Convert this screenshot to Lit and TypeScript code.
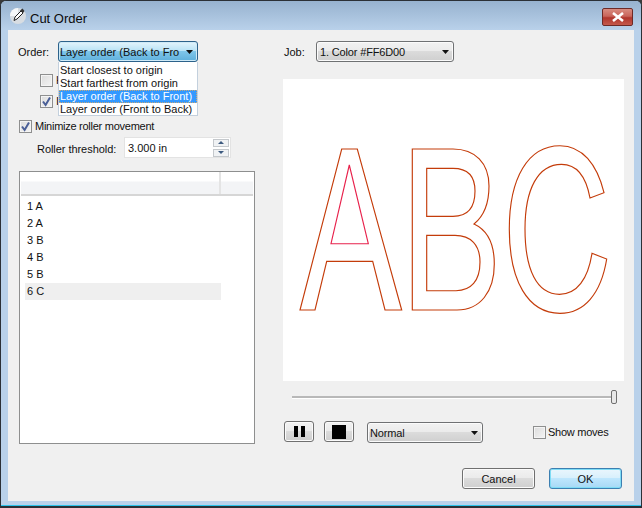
import { LitElement, html, css, svg } from "lit";
import { customElement } from "lit/decorators.js";

const check = html`<svg class="tick" viewBox="0 0 11 11"><path d="M2 5.5 L4.6 9 L9 1.6" fill="none" stroke="#4a5f97" stroke-width="2"/></svg>`;
const arrow = html`<svg class="arrow" viewBox="0 0 7 4"><path d="M0 0H7L3.5 4Z" fill="#111"/></svg>`;

const letters = svg`
  <g fill="none" stroke="#c43c0a" stroke-width="1.15">
    <path d="M341.7 149H357.3L401.7 310H385L372.7 261.3H326.7L315 310H300Z"/>
    <path d="M412.3 149H453C475 149 489 163 489 186C489 204 484 216 474 224C487 230 494.3 244 494.3 264C494.3 292 480 310 457 310H412.3Z"/>
    <path d="M426.7 168.3H453C468 168.3 475 176 475 191C475 208 468 216.3 453 216.3H426.7Z"/>
    <path d="M426.7 235.3H455C471 235.3 480 245 480 262C480 281 471 290.7 456 290.7H426.7Z"/>
    <path d="M604 192.7C597 164 582 145.7 560 145.7C528 145.7 509.3 178 509.3 229C509.3 281 528 313.3 560 313.3C584 313.3 601 294 606.7 259L592 253.3C588 279 577 294.3 559.5 294.3C537 294.3 525 270 525 229C525 189 538 164.3 561.5 164.3C576 164.3 586 176 590 198Z"/>
  </g>
  <path d="M349.3 165L368.3 243.7H331Z" fill="none" stroke="#e8224c" stroke-width="1.15"/>
`;

@customElement("app-root")
export class AppRoot extends LitElement {
  static styles = css`
    :host { display: block; width: 642px; height: 508px; font: 11px "Liberation Sans", Arial, sans-serif; color: #111; background: #3a3a3a; overflow: hidden; }
    * { box-sizing: border-box; }
    .window { width: 642px; height: 508px; display: flex; flex-direction: column; border: 1px solid #2b3036; border-bottom-width: 2px; border-radius: 6px 6px 0 0; background: #b9d1ea; box-shadow: inset 0 -1px 0 #2bc3ea; overflow: hidden; }
    .title { height: 29px; flex: none; display: flex; align-items: center; padding: 0 8px 0 8px; gap: 3px; background: linear-gradient(#97b2cf, #b9d1ea); }
    .title .app { width: 18px; height: 18px; flex: none; }
    .title .name { font-size: 13px; flex: 1; padding-top: 5px; color: #0b0b0b; }
    .close { width: 31px; height: 18px; margin-top: 3px; border: 1px solid #6e2a26; border-radius: 2px; background: linear-gradient(#d88c80 0, #c9645a 45%, #b0352c 55%, #c4594c 100%); display: flex; align-items: center; justify-content: center; }
    .close svg { width: 14px; height: 10px; }
    .content { flex: 1; margin: 0 7px 5px; background: #f0f0f0; padding: 11px 10px 0; display: grid; grid-template-columns: 255px 341px; gap: 10px; }
    .left, .right { display: flex; flex-direction: column; align-items: flex-start; }
    .row { display: flex; align-items: center; }
    .order { position: relative; height: 21px; }
    .order .lbl { width: 40px; }
    .select { height: 21px; border: 1px solid #6f7173; border-radius: 3px; background: linear-gradient(#f2f2f2 0, #ebebeb 45%, #dbdbdb 50%, #cfcfcf 100%); display: flex; align-items: center; justify-content: space-between; padding: 0 4px 0 3px; box-shadow: inset 0 0 0 1px #fbfbfb; white-space: nowrap; overflow: hidden; letter-spacing: -0.15px; }
    .speed { padding-left: 2px; }
    .select.focus { width: 140px; padding-left: 1px; border-color: #2c628b; background: linear-gradient(#e3f4fc 0, #b9e3f6 45%, #7fc6ea 50%, #5fb0dc 100%); box-shadow: inset 0 0 0 1px #cfeaf7; letter-spacing: 0; }
    .arrow { width: 7px; height: 4px; flex: none; }
    .popup { position: absolute; left: 40px; top: 21px; width: 140px; height: 54px; background: #fff; border: 1px solid #c3d0dd; border-top: none; z-index: 2; line-height: 13px; padding-top: 2px; }
    .popup div { height: 13px; padding-left: 1px; white-space: nowrap; }
    .popup .sel { background: #3399ff; color: #fff; outline: 1px dotted #c9a878; outline-offset: -1px; }
    .check { display: flex; align-items: center; gap: 3px; line-height: 13px; }
    .box { width: 13px; height: 13px; flex: none; border: 1px solid #8e8f8f; background: linear-gradient(135deg, #dcdcdc, #f4f4f4); box-shadow: inset 0 0 0 1px #f4f4f4; display: flex; align-items: center; justify-content: center; }
    .tick { width: 11px; height: 11px; }
    .c1 { margin: 12px 0 0 22px; }
    .c2 { margin: 8px 0 0 22px; }
    .c3 { margin: 12px 0 0 1px; letter-spacing: -0.26px; }
    .roller { margin: 4px 0 0 19px; height: 21px; }
    .roller .lbl { width: 87px; padding-top: 2px; letter-spacing: -0.05px; }
    .spin { width: 107px; height: 21px; background: #fff; border: 1px solid #e3e3e3; display: flex; align-items: center; justify-content: space-between; padding: 0 1px 0 3px; }
    .spins { display: flex; flex-direction: column; gap: 2px; }
    .spins span { width: 16px; height: 8px; border: 1px solid #c4c8cc; background: #f0f2f4; display: flex; align-items: center; justify-content: center; }
    .spins svg { width: 6px; height: 3px; }
    .list { margin: 13px 0 0 1px; width: 236px; height: 273px; background: #fff; border: 1px solid #8e8f8f; padding: 0 1px; }
    .head { height: 24px; display: flex; border-bottom: 2px solid #d6d6d6; background: linear-gradient(#fff 0, #fff 9px, #f3f4f6 10px, #f3f4f6 100%); }
    .head div { width: 200px; border-right: 2px solid #e4e4e4; }
    .rows { padding: 2px 0 0 4px; }
    .item { height: 17px; width: 196px; line-height: 17px; padding-left: 2px; }
    .item.hi { background: #efefef; }
    .job { height: 21px; padding-left: 1px; }
    .job .lbl { width: 32px; }
    .job .select { width: 138px; }
    .canvas { margin-top: 17px; width: 341px; height: 302px; background: #fff; }
    .canvas svg { display: block; width: 341px; height: 302px; }
    .slider { margin: 9px 0 0 9px; width: 325px; height: 14px; display: flex; align-items: center; }
    .track { flex: 1; background: #b8b8b8; border-bottom: 1px solid #fff; height: 3px; }
    .thumb { width: 6px; height: 14px; border: 1px solid #707070; border-radius: 2px; background: #e8e8e8; margin-left: -2px; }
    .controls { margin: 17px 0 0 1px; width: 340px; align-items: flex-start; }
    .btn { width: 30px; height: 21px; border: 1px solid #707070; border-radius: 3px; background: linear-gradient(#f2f2f2 0, #ebebeb 45%, #dbdbdb 50%, #cfcfcf 100%); box-shadow: inset 0 0 0 1px #fbfbfb; display: flex; align-items: center; justify-content: center; }
    .btn + .btn { margin-left: 10px; }
    .pause { width: 11px; height: 11px; border-left: 4px solid #000; border-right: 4px solid #000; }
    .stop { width: 14px; height: 14px; background: #000; }
    .speed { margin: 1px 0 0 13px; width: 116px; }
    .moves { margin: 5px 0 0 50px; gap: 2px; letter-spacing: -0.25px; }
    .footer { margin: 25px 0 0 179px; gap: 14px; }
    .action { width: 73px; height: 21px; border: 1px solid #707070; border-radius: 3px; background: linear-gradient(#f2f2f2 0, #ebebeb 45%, #dbdbdb 50%, #cfcfcf 100%); box-shadow: inset 0 0 0 1px #fbfbfb; display: flex; align-items: center; justify-content: center; }
    .action.primary { border-color: #3c7fb1; background: linear-gradient(#eaf6fd 0, #d9f0fc 45%, #bee6fd 50%, #a7d9f5 100%); box-shadow: inset 0 0 0 1px #7fdcf5; }
  `;

  render() {
    return html`
      <div class="window">
        <div class="title">
          <svg class="app" viewBox="0 0 18 18">
            <circle cx="9" cy="9" r="8" fill="#d8dde2"/>
            <path d="M1 9a8 8 0 0 1 8-8v8z" fill="#f4f6f8"/>
            <path d="M5 13.5L6 10L12 4L14 6L8 12Z" fill="#fff" stroke="#222" stroke-width="1"/>
            <path d="M11 3.5L13.5 1.5L15.5 4L14 6Z" fill="#333"/>
          </svg>
          <span class="name">Cut Order</span>
          <div class="close">
            <svg viewBox="0 0 14 10"><path d="M2 1L12 9M12 1L2 9" stroke="#fff" stroke-width="2.6" fill="none"/></svg>
          </div>
        </div>
        <div class="content">
          <div class="left">
            <div class="row order">
              <span class="lbl">Order:</span>
              <div class="select focus"><span>Layer order (Back to Fro</span>${arrow}</div>
              <div class="popup">
                <div>Start closest to origin</div>
                <div>Start farthest from origin</div>
                <div class="sel">Layer order (Back to Front)</div>
                <div>Layer order (Front to Back)</div>
              </div>
            </div>
            <div class="check c1"><span class="box"></span><span>H</span></div>
            <div class="check c2"><span class="box">${check}</span><span>I</span></div>
            <div class="check c3"><span class="box">${check}</span><span>Minimize roller movement</span></div>
            <div class="row roller">
              <span class="lbl">Roller threshold:</span>
              <div class="spin">
                <span>3.000 in</span>
                <div class="spins">
                  <span><svg viewBox="0 0 6 3"><path d="M3 0L6 3H0Z" fill="#3d5a80"/></svg></span>
                  <span><svg viewBox="0 0 6 3"><path d="M0 0H6L3 3Z" fill="#3d5a80"/></svg></span>
                </div>
              </div>
            </div>
            <div class="list">
              <div class="head"><div></div></div>
              <div class="rows">
                <div class="item">1 A</div>
                <div class="item">2 A</div>
                <div class="item">3 B</div>
                <div class="item">4 B</div>
                <div class="item">5 B</div>
                <div class="item hi">6 C</div>
              </div>
            </div>
          </div>
          <div class="right">
            <div class="row job">
              <span class="lbl">Job:</span>
              <div class="select"><span>1. Color #FF6D00</span>${arrow}</div>
            </div>
            <div class="canvas"><svg viewBox="283 79 341 302">${letters}</svg></div>
            <div class="slider"><div class="track"></div><div class="thumb"></div></div>
            <div class="row controls">
              <div class="btn"><div class="pause"></div></div>
              <div class="btn"><div class="stop"></div></div>
              <div class="select speed"><span>Normal</span>${arrow}</div>
              <div class="check moves"><span class="box"></span><span>Show moves</span></div>
            </div>
            <div class="row footer">
              <div class="action">Cancel</div>
              <div class="action primary">OK</div>
            </div>
          </div>
        </div>
      </div>
    `;
  }
}
